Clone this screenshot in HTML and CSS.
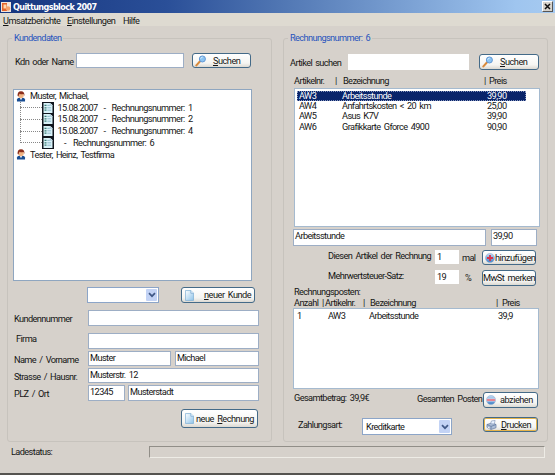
FILE: index.html
```html
<!DOCTYPE html>
<html lang="de">
<head>
<meta charset="utf-8">
<title>Quittungsblock 2007</title>
<link rel="stylesheet" href="styles.css">
</head>
<body>
<svg class="defs" width="0" height="0">
  <defs>
    <linearGradient id="paper" x1="0" y1="0" x2="1" y2="1"><stop offset="0" stop-color="#fff"/><stop offset="1" stop-color="#8fc4ea"/></linearGradient>
    <linearGradient id="ball" x1="0" y1="0" x2="0" y2="1"><stop offset="0" stop-color="#c4dcf4"/><stop offset="1" stop-color="#3f82c8"/></linearGradient>
    <symbol id="lens" viewBox="0 0 13 13"><path d="M1.5 11.3 5.5 6.8" stroke="#d88a3c" stroke-width="2.2" stroke-linecap="round"/><circle cx="8" cy="4.3" r="3.3" fill="#8cc4f2" stroke="#5d94d2"/><path d="M6.2 4a2 2 0 0 1 2-1.6" fill="none" stroke="#e4f5ff"/></symbol>
    <symbol id="page" viewBox="0 0 10 12"><path d="M.5.5h6l3 3v8h-9z" fill="url(#paper)" stroke="#7eaed4" stroke-width=".8"/><path d="M6.5.5v3h3" fill="#e9f6ff" stroke="#6a9cc8" stroke-width=".7"/></symbol>
    <symbol id="user" viewBox="0 0 10 12"><path d="M.6 11.5V9.2Q1 7.5 3 7.4h4Q9 7.5 9.4 9.2v2.3z" fill="#174c92"/><path d="M3.4 7h3.2L5 10z" fill="#e6eefa"/><ellipse cx="5" cy="4.6" rx="3" ry="3.3" fill="#f0b483"/><path d="M1.3 5.5Q.8.4 5 .4t3.7 5.1L7.7 3.4Q5 3.8 3.3 2.9L2.2 6z" fill="#8b2e1b"/></symbol>
    <symbol id="bill" viewBox="0 0 12 12"><path d="M0 0h12v12H0z" fill="#10151d"/><path d="M1.5 1h6.8l2.2 2.2V11h-9z" fill="#d9f2f8"/><path d="M8.3 1v2.2h2.2" fill="#fff" stroke="#6795ae" stroke-width=".5"/><path d="M2.5 3.4h2M2.5 5.8h2M2.5 8.2h2" stroke="#397b72" stroke-width="1.2"/><path d="M5.3 3.4h2.5M5.3 5.8h3.8M5.3 8.2h3.8" stroke="#7dacc1" stroke-width=".8"/></symbol>
    <symbol id="plus" viewBox="0 0 11 11"><circle cx="5.5" cy="5.5" r="5" fill="url(#ball)" stroke="#91abd0" stroke-width=".6"/><path d="M5.5 2.2v6.6M2.2 5.5h6.6" stroke="#d7324b" stroke-width="2"/></symbol>
    <symbol id="minus" viewBox="0 0 11 11"><circle cx="5.5" cy="5.5" r="5" fill="url(#ball)" stroke="#91abd0" stroke-width=".6"/><path d="M.8 4h9.4v3H.8z" fill="#f5e9f0"/><path d="M1 5.5h9" stroke="#df4b5c" stroke-width="1.4"/></symbol>
    <symbol id="printer" viewBox="0 0 12 11"><path d="M1 5 7 3l4 2v3.5L5.5 10.5 1 8z" fill="#aebfd8" stroke="#5c7399" stroke-width=".7"/><path d="m5 4 1-3 4-.5L9 4.5z" fill="#eaf3ff" stroke="#7087ac" stroke-width=".6"/><path d="M1 5l4.5 2L11 5M5.5 7v3" fill="none" stroke="#536b94" stroke-width=".7"/><path d="m2 8 2 1" stroke="#fff"/></symbol>
    <symbol id="down" viewBox="0 0 8 6"><path d="m1 1.2 3 3 3-3" fill="none" stroke="#405886" stroke-width="1.7"/></symbol>
  </defs>
</svg>
<div class="window">
  <header class="titlebar">
    <svg class="logo" viewBox="0 0 10 10"><path d="M0 0h10v10H0z" fill="#f2e4dc"/><path d="M1 1h5v8H1z" fill="#e3632b"/><path d="M2.5 2.5h3v4h-3z" fill="#ffd6ad"/><circle cx="7" cy="6.5" r="2.3" fill="#f4a06c"/></svg>
    <h1>Quittungsblock 2007</h1>
    <button class="close" aria-label="Schließen"><svg viewBox="0 0 7 7"><path d="m1 1 5 5M6 1 1 6" stroke="#111" stroke-width="1.5"/></svg></button>
  </header>
  <nav class="menu"><span class="m1"><u>U</u>msatzberichte</span><span class="m2"><u>E</u>instellungen</span><span class="m3">Hilfe</span></nav>
  <main class="panels">
    <section class="group">
      <h2 class="legend">Kundendaten</h2>
      <div class="row customer-search">
        <label>Kdn oder Name</label><div class="field"></div>
        <button class="btn"><svg class="i-lens"><use href="#lens"/></svg><span class="t-search"><u>S</u>uchen</span></button>
      </div>
      <div class="tree">
        <div class="person"><svg><use href="#user"/></svg><span>Muster, Michael,</span></div>
        <div class="children">
          <div class="bill"><i></i><svg><use href="#bill"/></svg><span class="t-date">15.08.2007</span><span class="dash">-</span><span class="t-num">Rechnungsnummer: 1</span></div>
          <div class="bill"><i></i><svg><use href="#bill"/></svg><span class="t-date">15.08.2007</span><span class="dash">-</span><span class="t-num">Rechnungsnummer: 2</span></div>
          <div class="bill"><i></i><svg><use href="#bill"/></svg><span class="t-date">15.08.2007</span><span class="dash">-</span><span class="t-num">Rechnungsnummer: 4</span></div>
          <div class="bill undated"><i></i><svg><use href="#bill"/></svg><span class="dash">-</span><span class="t-num">Rechnungsnummer: 6</span></div>
        </div>
        <div class="person"><svg><use href="#user"/></svg><span>Tester, Heinz, Testfirma</span></div>
      </div>
      <div class="row new-customer">
        <div class="combo"><span></span><b><svg><use href="#down"/></svg></b></div>
        <button class="btn"><svg class="i-page"><use href="#page"/></svg><span class="t-newc"><u>n</u>euer Kunde</span></button>
      </div>
      <div class="row form r-number"><label>Kundennummer</label><div class="field"></div></div>
      <div class="row form r-company"><label>Firma</label><div class="field"></div></div>
      <div class="row form r-name"><label>Name / Vorname</label><div class="field">Muster</div><div class="field">Michael</div></div>
      <div class="row form r-street"><label>Strasse / Hausnr.</label><div class="field">Musterstr. 12</div></div>
      <div class="row form r-city"><label>PLZ / Ort</label><div class="field">12345</div><div class="field">Musterstadt</div></div>
      <div class="row new-bill"><button class="btn"><svg class="i-page"><use href="#page"/></svg><span class="t-newb">neue <u>R</u>echnung</span></button></div>
    </section>
    <section class="group">
      <h2 class="legend">Rechnungsnummer: 6</h2>
      <div class="row article-search">
        <label>Artikel suchen</label><div class="field plain"></div>
        <button class="btn"><svg class="i-lens"><use href="#lens"/></svg><span class="t-search"><u>S</u>uchen</span></button>
      </div>
      <div class="heads heads-a"><span>Artikelnr.</span><span>|</span><span>Bezeichnung</span><span>|</span><span>Preis</span></div>
      <div class="list articles">
        <div class="item selected"><span>AW3</span><span>Arbeitsstunde</span><span>39,90</span></div>
        <div class="item"><span>AW4</span><span>Anfahrtskosten &lt; 20 km</span><span>25,00</span></div>
        <div class="item"><span>AW5</span><span>Asus K7V</span><span>39,90</span></div>
        <div class="item"><span>AW6</span><span>Grafikkarte Gforce 4900</span><span>90,90</span></div>
      </div>
      <div class="row chosen"><div class="field">Arbeitsstunde</div><div class="field">39,90</div></div>
      <div class="row add"><label>Diesen Artikel der Rechnung</label><div class="field plain">1</div><label>mal</label><button class="btn"><svg class="i-ball"><use href="#plus"/></svg><span class="t-add">hinzufügen</span></button></div>
      <div class="row tax"><label>Mehrwertsteuer-Satz:</label><div class="field plain">19</div><label>%</label><button class="btn"><span>MwSt merken</span></button></div>
      <div class="items-label">Rechnungsposten:</div>
      <div class="heads heads-b"><span>Anzahl</span><span>|</span><span>Artikelnr.</span><span>|</span><span>Bezeichnung</span><span>|</span><span>Preis</span></div>
      <div class="list positions"><div class="item"><span>1</span><span>AW3</span><span>Arbeitsstunde</span><span>39,9</span></div></div>
      <div class="row total"><label>Gesamtbetrag: 39,9€</label><label class="t-all">Gesamten Posten</label><button class="btn"><svg class="i-ball"><use href="#minus"/></svg><span class="t-sub">abziehen</span></button></div>
      <div class="row pay"><label>Zahlungsart:</label><div class="combo"><span>Kreditkarte</span><b><svg><use href="#down"/></svg></b></div><button class="btn focus"><svg class="i-print"><use href="#printer"/></svg><span class="t-print"><u>D</u>rucken</span></button></div>
    </section>
  </main>
  <footer class="status"><span>Ladestatus:</span><div class="progress"></div></footer>
</div>
</body>
</html>
```
FILE: styles.css
```css
* { box-sizing: border-box; }
body { margin: 0; width: 555px; height: 475px; overflow: hidden; background: #d6d1cb; color: #151515; font: 9.2px/12px Roboto, "Liberation Sans", sans-serif; letter-spacing: -.6px; word-spacing: 1.5px; }
svg { display: block; flex: none; overflow: visible; }
.defs { position: absolute; }
.window { height: 475px; display: flex; flex-direction: column; border-bottom: 2px solid #55534f; white-space: nowrap; }
.titlebar { flex: none; height: 13px; display: flex; align-items: center; padding: 0 2px 0 1px; background: linear-gradient(90deg, #17367f, #2a4f98 30%, #5379b5 52%, #9fc5ef 93%, #a6caf0); }
.logo { width: 10px; height: 10px; }
h1 { margin: 0 0 0 2px; font: bold 9px/12px "DejaVu Sans Condensed", "Open Sans", sans-serif; letter-spacing: -.6px; word-spacing: 0; color: #fff; }
.close { margin-left: auto; width: 11px; height: 11px; padding: 1px; border: 1px solid; border-color: #fff #555 #555 #fff; background: #d6d2cb; }
.close svg { width: 7px; height: 7px; }
.menu { height: 13px; flex: none; display: flex; padding: 1px 0 0 3px; background: #dedad1; letter-spacing: -.5px; }
.menu span { line-height: 13px; }
.m1 { width: 64px; } .m2 { width: 56px; }
u { text-decoration: underline; text-underline-offset: 1px; text-decoration-thickness: 1px; }
.panels { flex: none; display: grid; grid-template-columns: 265px 265px; gap: 11px; padding: 12px 7px 0; height: 416px; }
.group { height: 404px; border: 1px solid #c7c3bd; border-radius: 3px; display: flex; flex-direction: column; }
.legend { flex: none; align-self: flex-start; margin: -7px 0 0 4px; padding: 0 2px; height: 12px; background: #d6d1cb; font-size: 9.2px; font-weight: normal; line-height: 12px; color: #2854bd; }
.row { display: grid; flex: none; align-items: start; }
.field { height: 100%; border: 1px solid #9daec5; background: #fff; padding: 0 1px; line-height: 11px; overflow: hidden; }
.plain { border-color: #fff; }
label { display: block; line-height: 12px; }
.btn { height: 100%; display: flex; align-items: center; padding: 0; border: 1px solid #446a88; border-radius: 3px; background: linear-gradient(#fff, #f5f5f2 70%, #dcd9d2); font: inherit; letter-spacing: -.5px; word-spacing: inherit; color: inherit; }
.combo { height: 100%; border: 1px solid #8ca5c8; background: #fff; display: flex; justify-content: space-between; align-items: center; padding: 1px; }
.combo b { height: 100%; width: 11px; display: grid; place-items: center; background: #c3d3f5; border-radius: 1px; }
.combo svg { width: 8px; height: 6px; }
.i-lens { width: 12px; height: 12px; margin-left: 2px; }
.i-page { width: 9px; height: 11px; margin-left: 3px; }
.i-ball { width: 10px; height: 10px; margin-left: 2px; }
.i-print { width: 11px; height: 10px; margin-left: 2px; }
.t-search { margin-left: 6px; }

.customer-search { height: 15px; margin: 9px 0 0 7px; grid-template-columns: 61px 108px 8px 59px; }
.customer-search .btn { grid-column: 4; }
.customer-search label { padding-top: 3px; }
.tree { flex: none; height: 192px; width: 239px; margin: 21px 0 0 5px; border: 1px solid #8fa6c0; background: #fff; padding: 0 0 0 2px; }
.person { display: flex; height: 12px; align-items: center; }
.person svg { width: 10px; height: 11px; }
.person span { margin-left: 4px; }
.children { position: relative; height: 46.5px; }
.children::before { content: ""; position: absolute; left: 4px; top: 0; height: 41px; border-left: 1px dotted #888; }
.bill { display: flex; align-items: center; height: 11.65px; padding-left: 4px; }
.bill i { width: 22px; border-top: 1px dotted #888; }
.bill svg { width: 12px; height: 12px; }
.t-date { width: 46px; margin-left: 3.5px; }
.t-num { letter-spacing: -.55px; }
.dash { width: 8px; }
.undated .dash { margin-left: 10px; width: 9px; }
.new-customer { height: 16px; margin: 6px 0 0 79px; grid-template-columns: 72px 74px; column-gap: 22px; }
.t-newc { margin-left: 10px; }
.form { margin-left: 6px; grid-template-columns: 74px 171px; height: 16px; }
.form label { padding-top: 3px; }
.r-number { margin-top: 7px; }
.r-company { margin-top: 7px; }
.r-company label { padding: 0 0 0 2px; }
.r-name { margin-top: 2px; grid-template-columns: 74px 83px 88px; height: 15px; }
.r-name .field:last-child { margin-left: 4px; }
.r-street { margin-top: 2px; height: 15px; }
.r-city { margin-top: 2px; grid-template-columns: 74px 37px 134px; }
.r-city .field:last-child { margin-left: 3px; }
.new-bill { margin: 8px 0 0 173px; grid-template-columns: 77px; height: 19px; }
.t-newb { margin-left: 2px; }

.article-search { height: 15px; margin: 10px 0 0 6px; grid-template-columns: 58px 121px 10px 60px; }
.article-search .btn { grid-column: 4; height: 16px; }
.article-search label { padding-top: 3px; }
.heads { flex: none; display: grid; height: 10px; line-height: 10px; }
.heads-a { margin: 7px 0 0 10px; grid-template-columns: 41px 8px 141px 5px 30px; }
.list { flex: none; background: #fff; border: 1px solid #a5bacf; overflow: hidden; }
.articles { width: 246px; height: 139px; margin: 2px 0 0 10px; padding: 2px 2px 0; }
.item { display: grid; height: 10.2px; line-height: 10.2px; }
.articles .item { width: 229px; padding-left: 2px; grid-template-columns: 43px 145px 22px; }
.articles .selected { background: #09246a; color: #fff; outline: 1px dotted #8796bd; outline-offset: -1px; }
.chosen { height: 17px; margin: 2px 0 0 9px; grid-template-columns: 193px 46px; column-gap: 5px; }
.add { height: 15px; margin: 4px 0 0 44px; grid-template-columns: 107px 24px 3px 20px 54px; }
.add .field, .tax .field { height: 14px; padding: 0 1px; }
.add label:nth-of-type(2), .tax label:nth-of-type(2) { grid-column: 4; padding-top: 2px; }
.t-add { margin-left: 0; }
.tax { height: 16px; margin: 5px 0 0 44px; grid-template-columns: 107px 24px 6px 17px 54px; }
.tax .btn { justify-content: center; }
.items-label { flex: none; margin: 0 0 0 10px; height: 11px; line-height: 11px; }
.heads-b { margin: 0 0 0 10px; height: 11px; line-height: 12px; grid-template-columns: 28px 3px 38px 7px 126px 6px 30px; }
.positions { width: 246px; height: 81px; margin: 0 0 0 9px; padding: 1px 3px; }
.positions .item { grid-template-columns: 31px 41px 129px 30px; height: 12px; line-height: 12px; }
.total { height: 16px; margin: 3px 0 0 10px; grid-template-columns: 123px 66px 55px; }
.t-all { padding-top: 1px; }
.t-sub { margin-left: 4px; }
.pay { height: 16px; margin: 9px 0 0 14px; grid-template-columns: 64px 90px 31px 55px; }
.pay .btn { grid-column: 4; height: 15px; }
.pay .combo { margin-top: 1px; }
.pay label { padding-top: 2px; }
.combo span { margin-left: 2px; }
.btn.focus { box-shadow: inset 0 0 0 1px #e4b34b; }
.t-print { margin-left: 4px; }
.status { flex: none; display: flex; padding: 4px 9px 0 11px; height: 20px; }
.status span { width: 138px; line-height: 12px; }
.progress { width: 396px; height: 12px; border: 1px solid; border-color: #918e88 #eeece6 #eeece6 #918e88; }
```
